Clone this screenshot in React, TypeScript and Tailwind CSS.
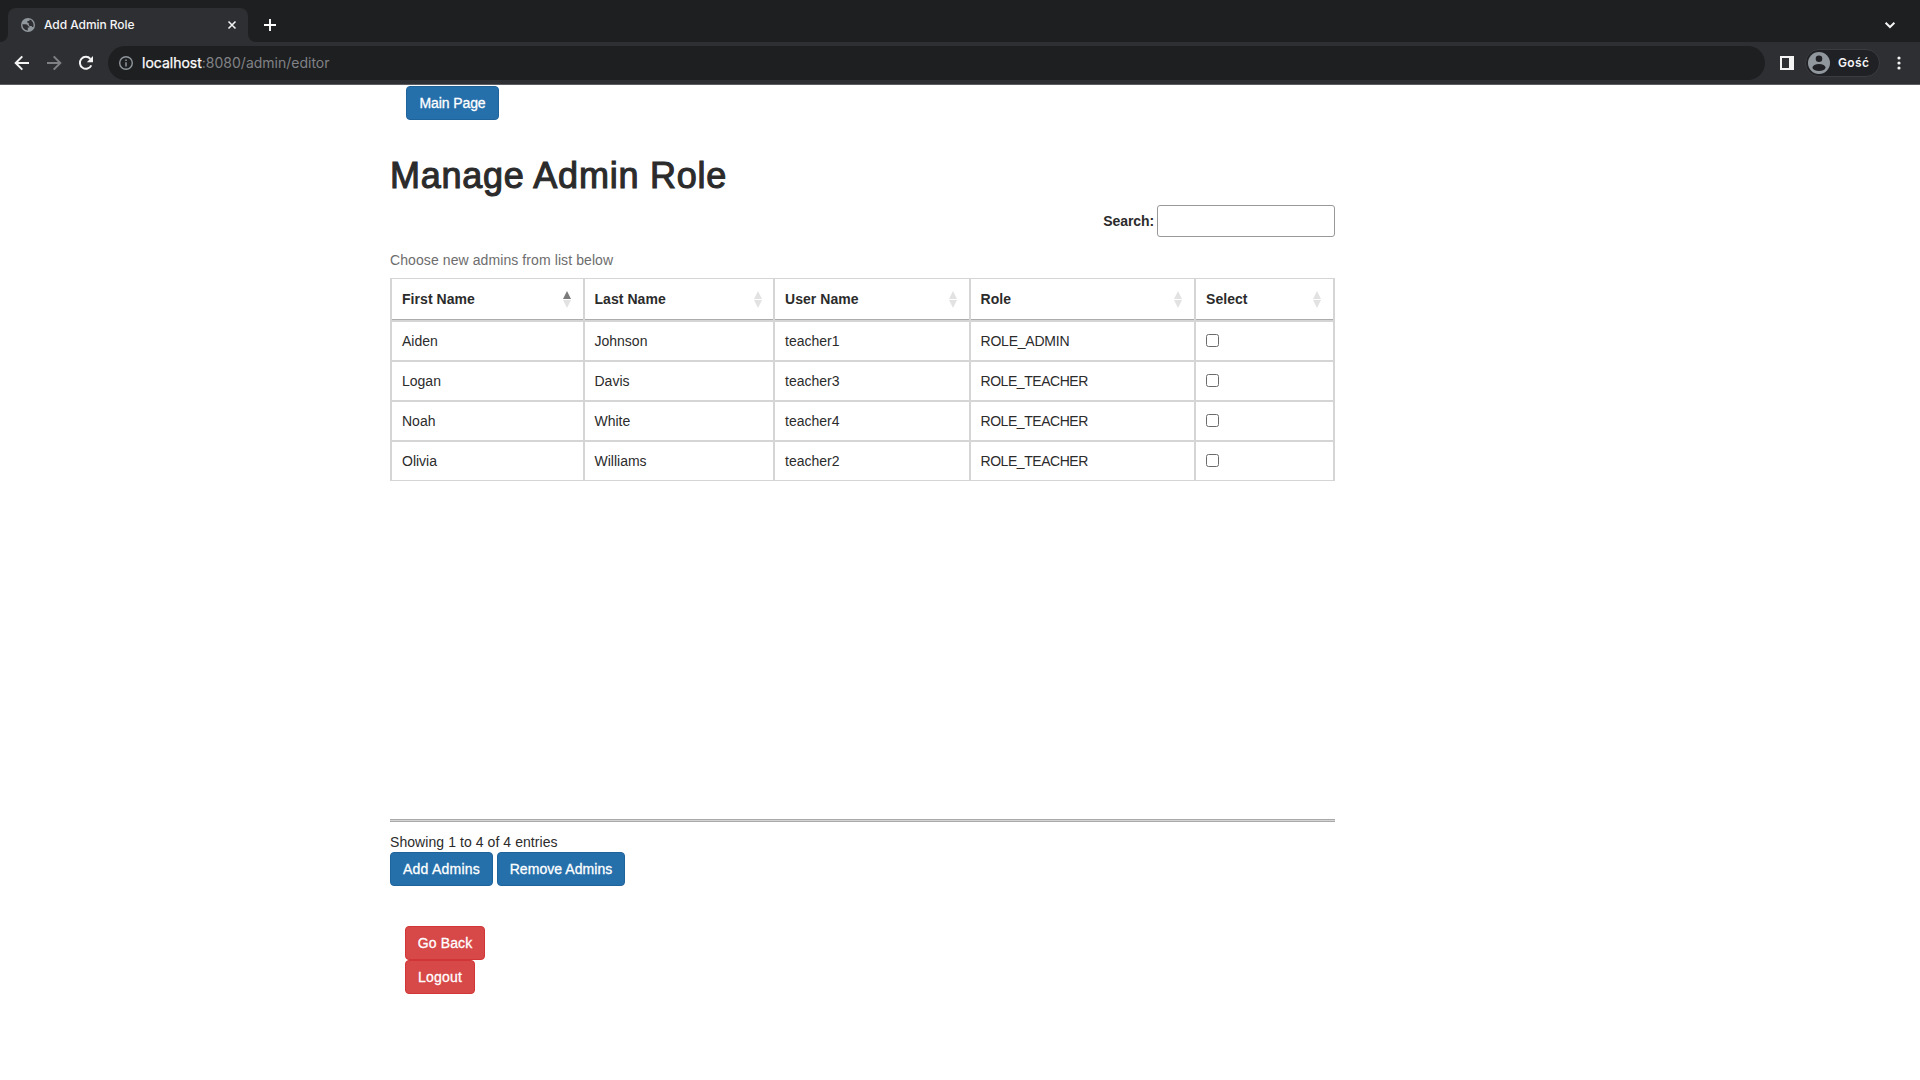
import React from "react";

const columns = [
  { name: "First Name", width: "w-[193px]", inset: "pl-[10px] pr-[12px]", sorted: true },
  { name: "Last Name", width: "w-[190px]", inset: "pl-[9.5px] pr-[11.5px]", sorted: false },
  { name: "User Name", width: "w-[196px]", inset: "pl-[10px] pr-[12px]", sorted: false },
  { name: "Role", width: "w-[225px]", inset: "pl-[9.5px] pr-[12px]", sorted: false },
  { name: "Select", width: "w-[139px]", inset: "pl-[10px] pr-[12px]", sorted: false },
];

const cellInsets = ["pl-[10px]", "pl-[9.5px]", "pl-[10px]", "pl-[9.5px]"];

const users = [
  { cells: ["Aiden", "Johnson", "teacher1", "ROLE_ADMIN"], roleTracking: "tracking-[-0.22px]" },
  { cells: ["Logan", "Davis", "teacher3", "ROLE_TEACHER"], roleTracking: "tracking-[-0.45px]" },
  { cells: ["Noah", "White", "teacher4", "ROLE_TEACHER"], roleTracking: "tracking-[-0.45px]" },
  { cells: ["Olivia", "Williams", "teacher2", "ROLE_TEACHER"], roleTracking: "tracking-[-0.45px]" },
];

function TabStrip() {
  return (
    <div className="flex h-[42px] items-end bg-[#1e1f21]">
      <svg width="8" height="8" viewBox="0 0 8 8" className="shrink-0">
        <path d="M8 0v8H0a8 8 0 0 0 8-8z" fill="#2e2f33" />
      </svg>
      <div className="flex h-[34px] w-[240px] items-center rounded-t-[8px] bg-[#2e2f33] pl-[13px] pr-[11px]">
        <svg width="14" height="14" viewBox="0 0 14 14" className="shrink-0">
          <circle cx="7" cy="7" r="7" fill="#90979d" />
          <path
            d="M1.4 6.3h3.2c1.5 0 2.4.8 2.4 2h1.3v1.3H6.8v2.9C3.7 12.4 1.3 9.8 1.4 6.3z"
            fill="#2e2f33"
          />
          <path
            d="M8.8 1.6c0 .9-.5 1.3-1.3 1.3H6.4v1.2c0 .8.6 1.2 1.4 1.2v1.4c0 .7.5 1.2 1.2 1.2h.9c.8 0 1.2.5 1.4 1.2h1c.5-1.7.4-3.3-.4-4.7-.6-1.3-1.7-2.3-3.1-2.800z"
            fill="#2e2f33"
          />
        </svg>
        <span className="ml-[9px] flex-1 text-[12px] font-medium leading-[16px] tracking-[-0.06px] text-[#f5f5f6]">
          Add Admin Role
        </span>
        <svg width="10" height="10" viewBox="0 0 10 10" stroke="#f1f1f2" strokeWidth="1.6">
          <path d="M1.5 1.5l7 7M8.5 1.5l-7 7" />
        </svg>
      </div>
      <svg width="8" height="8" viewBox="0 0 8 8" className="shrink-0">
        <path d="M0 0v8h8a8 8 0 0 1-8-8z" fill="#2e2f33" />
      </svg>
      <svg width="12" height="12" viewBox="0 0 12 12" stroke="#fff" strokeWidth="1.9" className="mb-[11px] ml-[8px]">
        <path d="M6 0v12M0 6h12" />
      </svg>
      <svg width="12" height="8" viewBox="0 0 12 8" fill="none" stroke="#f4f4f5" strokeWidth="2" className="mb-[13px] ml-auto mr-[24px]">
        <path d="M1.6 1.7L6 6l4.4-4.3" />
      </svg>
    </div>
  );
}

function Toolbar() {
  return (
    <div className="flex h-[43px] items-center border-b border-[#5c5d61] bg-[#2e2f33] pl-[14px]">
      <svg width="16" height="16" viewBox="0 0 16 16" fill="none" stroke="#f4f4f5" strokeWidth="2" className="shrink-0">
        <path d="M15 8H2.400M8.300 1.400L1.700 8l6.600 6.600" />
      </svg>
      <svg width="16" height="16" viewBox="0 0 16 16" fill="none" stroke="#7f8083" strokeWidth="2" className="ml-[16px] shrink-0">
        <path d="M1 8h12.600M7.700 1.400L14.300 8l-6.600 6.600" />
      </svg>
      <svg width="16" height="16" viewBox="0 0 16 16" fill="none" className="ml-[16px] shrink-0">
        <path d="M13.300 10.400A6 6 0 1 1 12.400 3.800" stroke="#f4f4f5" strokeWidth="2" />
        <path d="M15 1v6.200H8.800z" fill="#f4f4f5" />
      </svg>
      <div className="ml-[14px] flex h-[34px] w-[1657px] items-center rounded-full bg-[#1e1f21] pl-[11px]">
        <svg width="14" height="14" viewBox="0 0 14 14" fill="none" className="shrink-0">
          <circle cx="7" cy="7" r="6.3" stroke="#90979d" strokeWidth="1.4" />
          <path d="M7 6.200v4.300M7 3.500v1.500" stroke="#90979d" strokeWidth="1.5" />
        </svg>
        <span className="ml-[9px] text-[14px] leading-[20px] text-[#818286]">
          <span className="text-white [-webkit-text-stroke:0.25px_white]">localhost</span>:8080/admin/editor
        </span>
      </div>
      <svg width="14" height="14" viewBox="0 0 14 14" className="ml-[15px] shrink-0">
        <path d="M0 0h14v14H0zM2 2v10h7V2z" fill="#f4f4f5" fillRule="evenodd" />
      </svg>
      <div className="ml-[11px] flex h-[28px] w-[75px] items-center rounded-full border border-[#3b3c40] bg-[#202125] pl-[2px]">
        <svg width="22" height="22" viewBox="0 0 22 22" className="shrink-0">
          <circle cx="11" cy="11" r="11" fill="#90979d" />
          <circle cx="11" cy="6.8" r="3.3" fill="#202125" />
          <ellipse cx="11" cy="15.5" rx="6.5" ry="3.6" fill="#202125" />
        </svg>
        <span className="ml-[8px] text-[12px] font-semibold leading-[16px] tracking-[0.35px] text-[#f5f5f6]">Gość</span>
      </div>
      <svg width="4" height="14" viewBox="0 0 4 14" fill="#f4f4f5" className="ml-[17px] shrink-0">
        <circle cx="2" cy="2" r="1.6" />
        <circle cx="2" cy="7" r="1.6" />
        <circle cx="2" cy="12" r="1.6" />
      </svg>
    </div>
  );
}

function Button({ label, look }: { label: string; look: string }) {
  return (
    <button
      className={`flex h-[34px] items-center justify-center whitespace-nowrap rounded-[4px] border text-[14px] leading-[20px] text-white [-webkit-text-stroke:0.3px_white] ${look}`}
    >
      {label}
    </button>
  );
}

function SortArrows({ sorted }: { sorted: boolean }) {
  return (
    <svg width="8" height="17" viewBox="0 0 8 17">
      <path d="M4 0l4 8H0z" fill={sorted ? "#7b7b7b" : "#e2e2e2"} />
      <path d="M0 9h8l-4 8z" fill="#e2e2e2" />
    </svg>
  );
}

function UserTable() {
  return (
    <table className="w-[945px] table-fixed border-separate border-spacing-0 border-l-2 border-t border-[#d5d5d5]">
      <thead>
        <tr>
          {columns.map((c) => (
            <th key={c.name} className={`border-b-2 border-r-2 border-[#d5d5d5] p-0 ${c.width}`}>
              <div
                className={`flex h-[41px] items-center justify-between border-b border-[#acacac] text-left font-bold tracking-[0.05px] ${c.inset}`}
              >
                {c.name}
                <SortArrows sorted={c.sorted} />
              </div>
            </th>
          ))}
        </tr>
      </thead>
      <tbody>
        {users.map((u, i) => {
          const edge = i === users.length - 1 ? "border-b" : "border-b-2";
          return (
            <tr key={u.cells[0]}>
              {u.cells.map((value, col) => (
                <td key={value} className={`border-r-2 border-[#d5d5d5] p-0 ${edge}`}>
                  <div className={`flex h-[38px] items-center ${cellInsets[col]} ${col === 3 ? u.roleTracking : ""}`}>
                    {value}
                  </div>
                </td>
              ))}
              <td className={`border-r-2 border-[#d5d5d5] p-0 ${edge}`}>
                <div className="flex h-[38px] items-center pl-[10px]">
                  <input
                    type="checkbox"
                    className="mb-[1px] size-[13px] appearance-none rounded-[2.5px] border border-[#6c6c6c] bg-white"
                  />
                </div>
              </td>
            </tr>
          );
        })}
      </tbody>
    </table>
  );
}

export default function App() {
  return (
    <div className="h-[1080px] w-[1920px] overflow-hidden bg-white">
      <header className="font-['Inter',sans-serif]">
        <TabStrip />
        <Toolbar />
      </header>
      <main className="ml-[390px] w-[945px] pt-px font-['Liberation_Sans',sans-serif] text-[14px] leading-[20px] text-[#2b2b2b]">
        <div className="pl-[16px]">
          <Button label="Main Page" look="w-[93px] tracking-[-0.1px] border-[#1f639b] bg-[#2570ab]" />
        </div>
        <h1 className="mt-[36px] h-[39px] whitespace-nowrap text-[36px] leading-[40px] tracking-[0.75px] [-webkit-text-stroke:1.1px_#2b2b2b]">
          Manage Admin Role
        </h1>
        <div className="mt-[10px] flex items-center justify-end">
          <label className="font-bold tracking-[-0.1px]">Search:</label>
          <input className="ml-[3px] h-[32px] w-[178px] rounded-[3px] border border-[#989898] bg-white" />
        </div>
        <p className="mb-[8px] mt-[13px] tracking-[0.09px] text-[#6d6d6d]">Choose new admins from list below</p>
        <UserTable />
        <div className="mt-[338px] h-[3px] border-y border-[#a9a9a9] bg-[#d5d5d5]" />
        <p className="mt-[10px] tracking-[0.07px]">Showing 1 to 4 of 4 entries</p>
        <div className="flex gap-[4px]">
          <Button label="Add Admins" look="w-[103px] tracking-[0.24px] border-[#1f639b] bg-[#2570ab]" />
          <Button label="Remove Admins" look="w-[128px] tracking-[0.06px] border-[#1f639b] bg-[#2570ab]" />
        </div>
        <div className="mt-[40px] pl-[15px]">
          <Button label="Go Back" look="w-[80px] tracking-[0.15px] border-[#d13535] bg-[#d74848]" />
          <Button label="Logout" look="w-[70px] tracking-[0.2px] border-[#d13535] bg-[#d74848]" />
        </div>
      </main>
    </div>
  );
}
